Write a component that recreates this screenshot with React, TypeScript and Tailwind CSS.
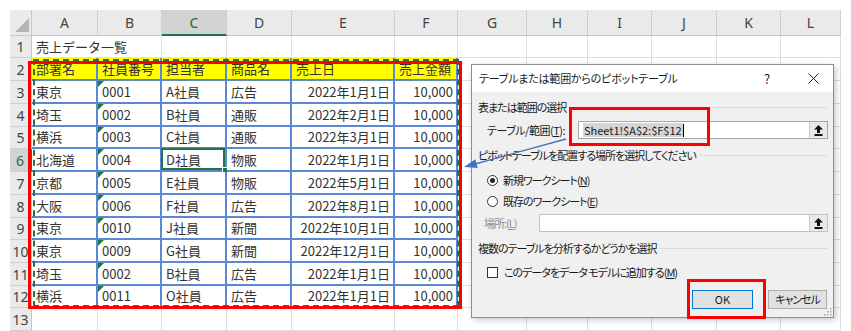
import React from "react";

const COLS = ["A", "B", "C", "D", "E", "F", "G", "H", "I", "J", "K", "L"];

const HEAD = ["部署名", "社員番号", "担当者", "商品名", "売上日", "売上金額"];

const DATA: string[][] = [
  ["東京", "0001", "A社員", "広告", "2022年1月1日", "10,000"],
  ["埼玉", "0002", "B社員", "通販", "2022年2月1日", "10,000"],
  ["横浜", "0003", "C社員", "通販", "2022年3月1日", "10,000"],
  ["北海道", "0004", "D社員", "物販", "2022年1月1日", "10,000"],
  ["京都", "0005", "E社員", "物販", "2022年5月1日", "10,000"],
  ["大阪", "0006", "F社員", "広告", "2022年8月1日", "10,000"],
  ["東京", "0010", "J社員", "新聞", "2022年10月1日", "10,000"],
  ["東京", "0009", "G社員", "新聞", "2022年12月1日", "10,000"],
  ["埼玉", "0002", "B社員", "広告", "2022年1月1日", "10,000"],
  ["横浜", "0011", "O社員", "広告", "2022年1月1日", "10,000"],
];

function cellText(row: number, col: number) {
  if (row === 1 && col === 0) return "売上データ一覧";
  if (row === 2 && col <= 5) return HEAD[col];
  if (row >= 3 && row <= 12 && col <= 5) return DATA[row - 3][col];
  return "";
}

function Cell({ row, col }: { row: number; col: number }) {
  const inTable = row >= 2 && row <= 12 && col <= 5;
  const isHead = row === 2 && col <= 5;
  const isSel = row === 6 && col === 2;
  const alignRight = row >= 3 && col >= 4;
  const border = inTable
    ? "border-r-2 border-b-2 border-[#5b88d6]"
    : row === 1 && col === 0
      ? "border-b border-[#dedede]"
      : "border-r border-b border-[#dedede]";
  return (
    <div
      className={`relative flex items-center whitespace-nowrap text-[13px] text-[#333] ${
        alignRight ? "justify-end pr-[3px]" : "pl-[4px]"
      } ${border} ${isHead ? "bg-[#ffff00]" : ""}`}
    >
      {col === 1 && row >= 3 && row <= 12 ? (
        <svg className="absolute left-0 top-0" width="6" height="6">
          <polygon points="0,0 6,0 0,6" fill="#1f7a3a" />
        </svg>
      ) : null}
      <span>{cellText(row, col)}</span>
      {isSel ? (
        <>
          <span className="absolute -left-[1px] -top-[1px] right-[0px] bottom-[0px] border-2 border-[#217346]" />
          <span className="absolute -right-[3px] -bottom-[3px] w-[6px] h-[6px] bg-[#217346] border border-white" />
        </>
      ) : null}
    </div>
  );
}

function Sheet() {
  const rows = Array.from({ length: 13 }, (_, i) => i + 1);
  return (
    <div className="grid grid-cols-[22px_66px_64px_65px_65px_103px_63px_69px_61px_64px_65px_64px_60px] grid-rows-[26px_22px_23px_23px_23px_22px_23px_23px_23px_22px_23px_23px_22px_23px]">
      {/* corner */}
      <div className="relative bg-[#eaeaea] border-r border-b border-[#c8c8c8]">
        <svg className="absolute right-[2px] bottom-[3px]" width="14" height="14">
          <polygon points="14,0 14,14 0,14" fill="#b5b5b5" />
        </svg>
      </div>
      {COLS.map((c) => (
        <div
          key={c}
          className={`flex items-center justify-center text-[14px] font-['Noto_Sans',sans-serif] border-r border-[#cfcfcf] ${
            c === "C"
              ? "bg-[#d3d3d3] text-[#1e6b3e] border-b-2 border-b-[#217346]"
              : "bg-[#eaeaea] text-[#444] border-b border-b-[#c4c4c4]"
          }`}
        >
          {c}
        </div>
      ))}
      {rows.map((r) => (
        <React.Fragment key={r}>
          <div
            className={`flex items-center justify-center text-[14px] font-['Noto_Sans',sans-serif] border-b border-[#cfcfcf] ${
              r === 6
                ? "bg-[#d3d3d3] text-[#1e6b3e] border-r-2 border-r-[#217346]"
                : "bg-[#eaeaea] text-[#444] border-r border-r-[#c4c4c4]"
            }`}
          >
            {r}
          </div>
          {COLS.map((_, c) => (
            <Cell key={c} row={r} col={c} />
          ))}
        </React.Fragment>
      ))}
    </div>
  );
}

function CollapseButton() {
  return (
    <div className="ml-auto w-[18px] h-full shrink-0 bg-[#e9e9e9] border-l border-[#c8c8c8] flex items-center justify-center">
      <svg width="9" height="11" viewBox="0 0 9 11">
        <polygon points="4.5,0 9,4.5 6,4.5 6,8 3,8 3,4.5 0,4.5" fill="#111" />
        <rect x="0.5" y="9" width="8" height="2" fill="#111" />
      </svg>
    </div>
  );
}

function SectionLabel({ text, className = "" }: { text: string; className?: string }) {
  return (
    <div className={`flex items-center h-[16px] ${className}`}>
      <span className="whitespace-nowrap">{text}</span>
      <div className="flex-1 h-px bg-[#dcdcdc] ml-[4px]" />
    </div>
  );
}

function Radio({ checked, label, hotkey, className = "" }: { checked: boolean; label: string; hotkey: string; className?: string }) {
  return (
    <div className={`flex items-center h-[16px] pl-[9px] ${className}`}>
      <span className="w-[11px] h-[11px] shrink-0 rounded-full border border-[#333] bg-white flex items-center justify-center">
        {checked ? <span className="w-[5px] h-[5px] rounded-full bg-[#222]" /> : null}
      </span>
      <span className="ml-[5px] whitespace-nowrap">
        {label}(<span className="underline">{hotkey}</span>)
      </span>
    </div>
  );
}

function PivotDialog() {
  return (
    <div className="absolute left-[471px] top-[64px] w-[363px] h-[254px] border border-[#8e8e8e] bg-[#f0f0f0] shadow-[2px_2px_6px_rgba(0,0,0,0.22)] flex flex-col text-[11px] tracking-[-1px] text-[#1a1a1a] [font-feature-settings:'palt']">
      <div className="h-[27px] bg-white flex items-center pl-[7px]">
        <span className="whitespace-nowrap tracking-[-0.2px]">テーブルまたは範囲からのピボットテーブル</span>
        <span className="ml-auto w-[20px] text-center text-[13px] tracking-normal">?</span>
        <span className="ml-[26px] mr-[10px] w-[20px] flex justify-center">
          <svg width="11" height="11" viewBox="0 0 11 11">
            <path d="M0.5 0.5 L10.5 10.5 M10.5 0.5 L0.5 10.5" stroke="#222" strokeWidth="1" />
          </svg>
        </span>
      </div>
      <div className="flex-1 flex flex-col pl-[6px] pr-[5px] relative">
        <SectionLabel text="表または範囲の選択" className="mt-[7px]" />
        <div className="flex items-center h-[18px] mt-[6px] pl-[9px]">
          <span className="whitespace-nowrap tracking-[-0.5px]">
            テーブル/範囲(<span className="underline">T</span>):
          </span>
          <div className="ml-auto w-[250px] shrink-0 h-[18px] border border-[#a5a5a5] bg-white flex items-center">
            <span className="ml-[4px] bg-[#d6d6d6] text-[11px] tracking-normal leading-[14px] px-px">Sheet1!$A$2:$F$12</span>
            <span className="w-px h-[13px] bg-black" />
            <CollapseButton />
          </div>
        </div>
        <SectionLabel text="ピボットテーブルを配置する場所を選択してください" className="mt-[8px]" />
        <Radio checked label="新規ワークシート" hotkey="N" className="mt-[9px]" />
        <Radio checked={false} label="既存のワークシート" hotkey="E" className="mt-[5px]" />
        <div className="flex items-center h-[18px] mt-[5px] pl-[6px]">
          <span className="text-[#8d8d8d] whitespace-nowrap">
            場所:(<span className="underline">L</span>)
          </span>
          <div className="ml-auto w-[289px] shrink-0 h-[18px] border border-[#c3c3c3] bg-white flex items-center">
            <CollapseButton />
          </div>
        </div>
        <SectionLabel text="複数のテーブルを分析するかどうかを選択" className="mt-[8px]" />
        <div className="flex items-center h-[16px] mt-[8px] pl-[9px]">
          <span className="w-[11px] h-[11px] shrink-0 border border-[#333] bg-white" />
          <span className="ml-[6px] whitespace-nowrap">
            このデータをデータ モデルに追加する(<span className="underline">M</span>)
          </span>
        </div>
        <div className="flex items-center justify-end h-[19px] mt-[10px] pr-[1px] gap-[15px]">
          <button className="w-[61px] h-[19px] bg-[#e1e1e1] border border-[#0078d7] text-[11px] tracking-normal">OK</button>
          <button className="w-[59px] h-[19px] bg-[#e1e1e1] border border-[#adadad] text-[11px]">キャンセル</button>
        </div>
        <svg className="absolute right-[1px] bottom-[1px]" width="8" height="8">
          <rect x="6" y="0" width="1.5" height="1.5" fill="#aaa" />
          <rect x="3" y="3" width="1.5" height="1.5" fill="#aaa" />
          <rect x="6" y="3" width="1.5" height="1.5" fill="#aaa" />
          <rect x="0" y="6" width="1.5" height="1.5" fill="#aaa" />
          <rect x="3" y="6" width="1.5" height="1.5" fill="#aaa" />
          <rect x="6" y="6" width="1.5" height="1.5" fill="#aaa" />
        </svg>
      </div>
    </div>
  );
}

export default function App() {
  return (
    <div className="relative w-[851px] h-[331px] overflow-hidden bg-white pt-[10px] pl-[10px] font-['Noto_Sans_CJK_JP',sans-serif]">
      <Sheet />

      {/* copy marquee around A2:F12 */}
      <div className="absolute left-[33px] top-[59px] w-[426px] h-[248px] border-2 border-dashed border-[#217346]" />
      {/* red annotation boxes */}
      <div className="absolute left-[28px] top-[61px] w-[434px] h-[248px] border-[3px] border-[#ff0000]" />

      <PivotDialog />

      <div className="absolute left-[569px] top-[107px] w-[141px] h-[39px] border-[3px] border-[#ff0000]" />
      <div className="absolute left-[687px] top-[279px] w-[79px] h-[40px] border-[3px] border-[#ff0000]" />

      <svg className="absolute inset-0 pointer-events-none" width="851" height="331" viewBox="0 0 851 331">
        <line x1="566" y1="139" x2="475" y2="164" stroke="#4472c4" strokeWidth="1.3" />
        <polygon points="464,167 477.7,167.9 475.3,159.3" fill="#4472c4" />
      </svg>
    </div>
  );
}
